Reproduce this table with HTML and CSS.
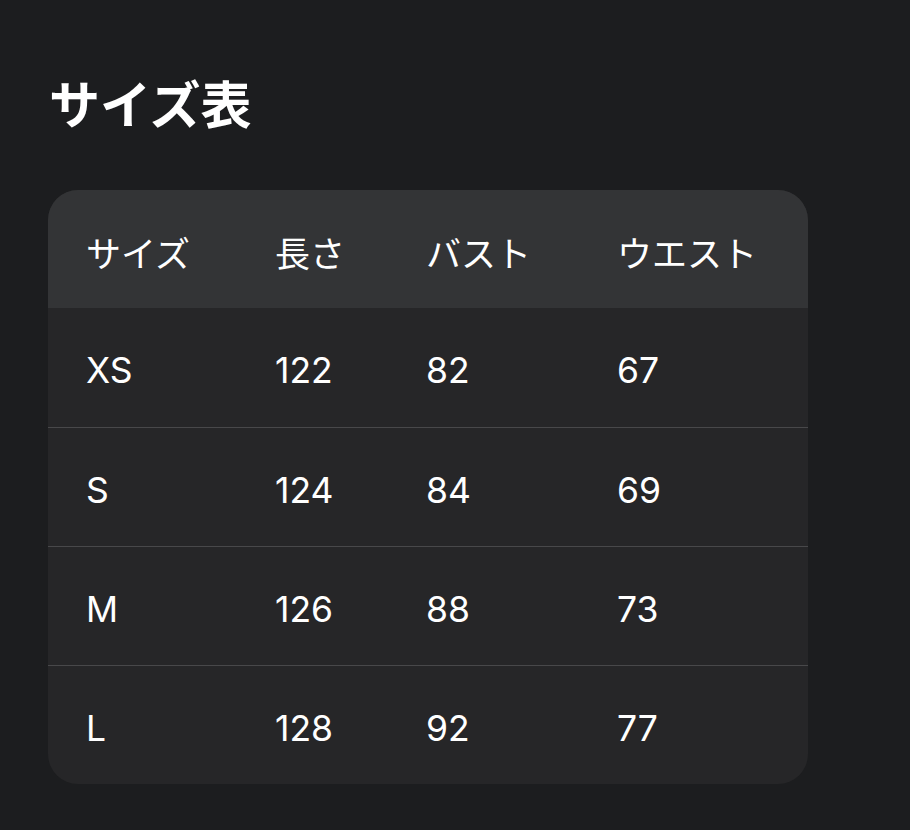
FILE: index.html
```html
<!DOCTYPE html>
<html lang="ja">
<head>
<meta charset="utf-8">
<link rel="stylesheet" href="styles.css">
</head>
<body>
<main class="page">
  <h1 class="title">サイズ表</h1>
  <div class="card">
    <div class="row head">
      <span>サイズ</span><span>長さ</span><span>バスト</span><span>ウエスト</span>
    </div>
    <div class="row">
      <span>XS</span><span>122</span><span>82</span><span>67</span>
    </div>
    <div class="row">
      <span>S</span><span>124</span><span>84</span><span>69</span>
    </div>
    <div class="row">
      <span>M</span><span>126</span><span>88</span><span>73</span>
    </div>
    <div class="row">
      <span>L</span><span>128</span><span>92</span><span>77</span>
    </div>
  </div>
</main>
</body>
</html>
```
FILE: styles.css
```css
html, body {
  margin: 0;
  padding: 0;
  background: #1c1d1f;
}
body {
  font-family: Inter, "Noto Sans CJK JP", sans-serif;
  color: #ffffff;
}
.page {
  padding: 72px 0 0 48px;
}
.title {
  margin: 0 0 50px 1px;
  font-size: 51px;
  line-height: 68px;
  font-weight: 700;
  font-family: Inter, "Noto Sans CJK JP", sans-serif;
}
.card {
  width: 760px;
  border-radius: 30px;
  overflow: hidden;
  background: #262628;
}
.row {
  display: grid;
  grid-template-columns: 189px 151px 191px 1fr;
  padding: 6px 0 0 38px;
  height: 112px;
  align-items: center;
  font-size: 35.5px;
  border-top: 1px solid #48484a;
}
.row.head {
  background: #333436;
  border-top: none;
  padding-top: 5px;
  height: 113px;
  font-size: 35px;
}
.row.head + .row {
  border-top: none;
  height: 113px;
}
```
